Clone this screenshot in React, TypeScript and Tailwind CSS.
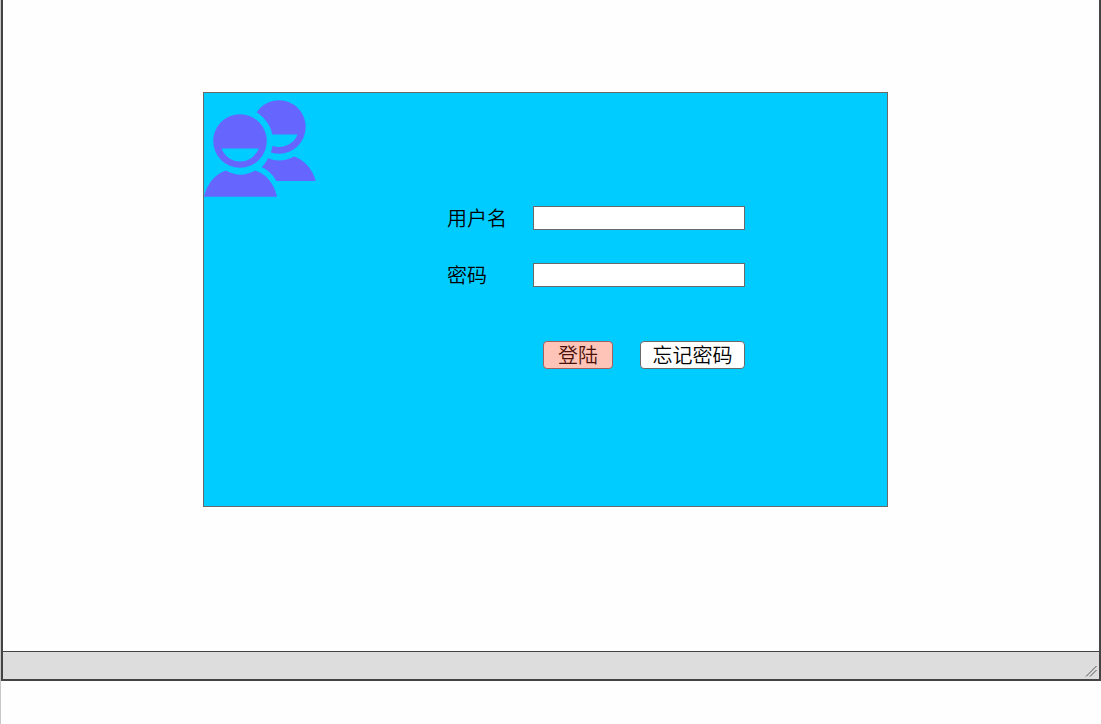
function UsersIcon() {
  return (
    <svg viewBox="0 0 114 104" className="block h-[104px] w-[114px]" fill="#6666ff" aria-hidden="true">
      <defs>
        <mask id="back-head" maskUnits="userSpaceOnUse" x="0" y="0" width="114" height="104">
          <rect width="114" height="104" fill="white" />
          <circle cx="36" cy="48" r="33" fill="black" />
          <path d="M56 41.5H93.6A20 20 0 0 1 56.5 41.5Z" fill="black" />
        </mask>
      </defs>
      <circle cx="75" cy="34" r="26.7" mask="url(#back-head)" />
      <path d="M64 65.3Q77 70.5 90.2 63.6C101 67.5 108.5 76.5 111.8 88H72.3C69 81.5 64 77 57.8 74.3Q61.5 70.5 64 65.3Z" />
      <path
        fillRule="evenodd"
        d="M36 21.2A26.8 26.8 0 1 1 36 74.8A26.8 26.8 0 1 1 36 21.2ZM17.5 55.6A20 20 0 0 0 54.8 55.6Z"
      />
      <path d="M0 103.8C2.7 91.5 10.5 81.5 21.8 77.5Q36.5 85.8 51.3 77.5C63 81.5 70.5 91.5 73 103.8Z" />
    </svg>
  );
}

function Field({ id, label, type }: { id: string; label: string; type: string }) {
  return (
    <div className="flex h-6 items-center">
      <label htmlFor={id} className="w-[86px] shrink-0">{label}</label>
      <input
        id={id}
        type={type}
        className="h-6 min-w-0 flex-1 border border-[#696969] bg-white px-1 text-base outline-none"
      />
    </div>
  );
}

export default function App() {
  return (
    <div className="min-h-screen border-l border-[#c8c8c8] bg-[#fefefe] font-['Noto_Sans_CJK_SC',sans-serif] text-xl leading-6 font-[350] text-black">
      <div className="border-x-2 border-b-2 border-[#444444]">
        <main className="pt-[92px] pr-[211px] pb-36 pl-[200px]">
          <form
            className="border border-[#696969] bg-[#00ccff] pb-[137px]"
            onSubmit={(event) => event.preventDefault()}
          >
            <UsersIcon />
            <div className="flex flex-col pt-[9px] pr-[142px] pl-[243px]">
              <div className="flex flex-col gap-[33px]">
                <Field id="username" label="用户名" type="text" />
                <Field id="password" label="密码" type="password" />
              </div>
              <div className="mt-[54px] flex justify-end gap-[27px]">
                <button
                  type="submit"
                  className="flex h-7 w-[70px] items-center justify-center rounded border border-[#a06060] bg-[#ffc4b8] text-[#4a1008]"
                >
                  登陆
                </button>
                <button
                  type="button"
                  className="flex h-7 w-[105px] items-center justify-center rounded border border-[#696969] bg-white"
                >
                  忘记密码
                </button>
              </div>
            </div>
          </form>
        </main>
        <footer className="flex h-7 items-end justify-end border-t border-[#444444] bg-[#dddddd] pr-[2px] pb-[2px]">
          <svg viewBox="0 0 12 12" className="size-3" stroke="#555555" fill="none" aria-hidden="true">
            <path d="M1 11.5L11.5 1M5 11.5L11.5 5" />
          </svg>
        </footer>
      </div>
    </div>
  );
}
